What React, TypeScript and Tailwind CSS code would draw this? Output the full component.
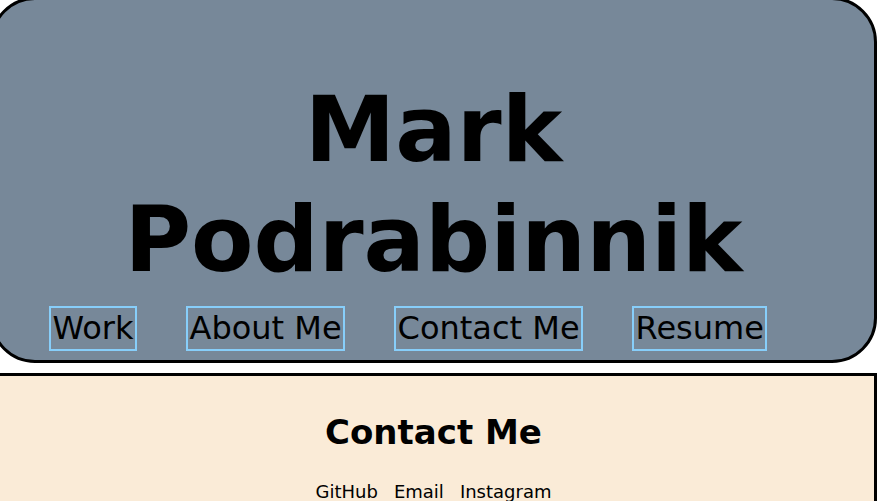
const links = ["Work", "About Me", "Contact Me", "Resume"];
const contacts = ["GitHub", "Email", "Instagram"];

export default function App() {
  return (
    <div className="min-h-[2500px] bg-white pr-[15px] font-['DejaVu_Sans',Verdana,sans-serif] text-black">
      <header className="-ml-[10px] -mt-[3px] rounded-[45px] border-[3px] border-black bg-[#778899] pt-[75px] pb-[9px]">
        <h1 className="text-center text-[91px] font-bold leading-[110px]">Mark Podrabinnik</h1>
        <nav className="mt-[11px] flex gap-[49px] pl-[56px]">
          {links.map((l) => (
            <a key={l} href="#" className="border-2 border-[#87cefa] px-[1.5px] py-[2px] text-[32px] leading-[37px]">
              {l}
            </a>
          ))}
        </nav>
      </header>
      <section className="-ml-[10px] mt-[10px] border-[3px] border-black bg-[#faebd7] pt-[36px] pb-[40px]">
        <h2 className="text-center text-[34px] font-bold leading-[40px]">Contact Me</h2>
        <div className="mt-[29px] flex justify-center gap-[16px] text-[18px] leading-[21px]">
          {contacts.map((c) => (
            <a key={c} href="#">
              {c}
            </a>
          ))}
        </div>
      </section>
    </div>
  );
}
